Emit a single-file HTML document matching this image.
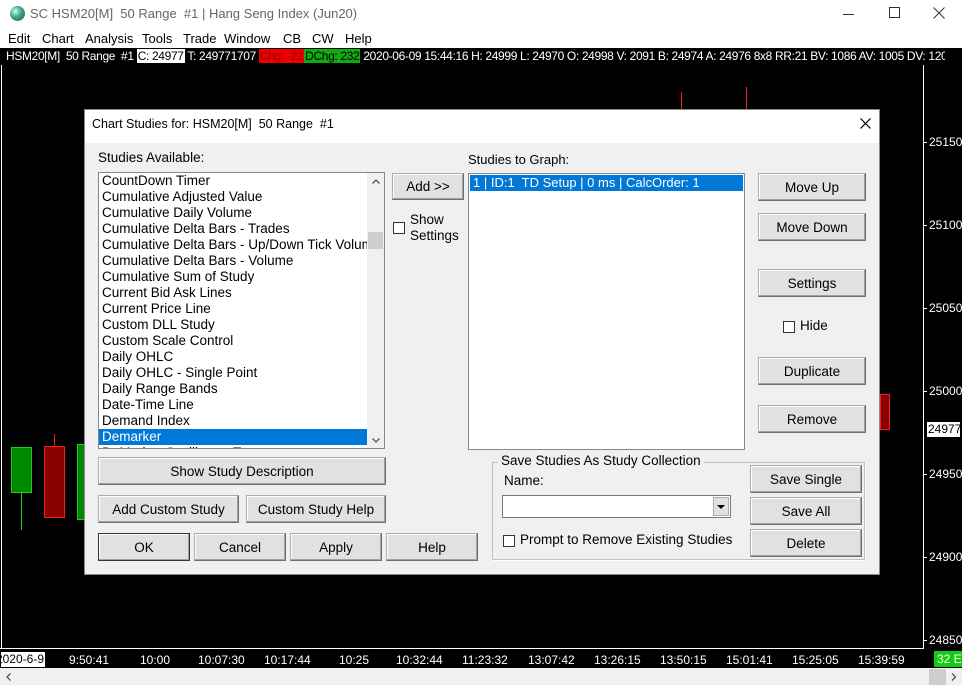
<!DOCTYPE html>
<html><head><meta charset="utf-8"><style>
*{margin:0;padding:0;box-sizing:border-box}
body{width:962px;height:685px;overflow:hidden;background:#fff;font-family:"Liberation Sans",Arial,sans-serif;font-size:13px;color:#000;position:relative}
.a{position:absolute}
.t{white-space:nowrap}
.btn{position:absolute;background:#e1e1e1;border:1px solid #adadad;border-right-color:#707070;border-bottom-color:#707070;box-shadow:inset -1px -1px 0 #a0a0a0,inset 1px 1px 0 #fff;text-align:center;font-size:13.5px;display:flex;align-items:center;justify-content:center;white-space:nowrap}
.cb{position:absolute;width:12px;height:12px;border:1px solid #333;background:#fff}
.li{height:16px;line-height:16px;padding-left:3px;font-size:13.5px;white-space:nowrap}
.wt{color:#fff;font-size:12px}
.tk{position:absolute;left:924px;width:3px;height:1px;background:#fff}
.m{position:absolute;top:31px;font-size:13px}
</style></head><body>
<div class="a" style="left:0;top:0;width:962px;height:29px;background:#fff"></div>
<div class="a" style="left:10px;top:6px;width:15px;height:15px;border-radius:50%;background:radial-gradient(circle at 35% 35%,#cfe,#4a9 40%,#274 80%)"></div>
<div class="a t" style="left:30px;top:6px;color:#666;font-size:13px">SC HSM20[M]&nbsp; 50 Range&nbsp; #1 | Hang Seng Index (Jun20)</div>
<div class="a" style="left:843px;top:14px;width:11px;height:1px;background:#333"></div>
<div class="a" style="left:889px;top:7px;width:11px;height:11px;border:1px solid #333"></div>
<svg class="a" style="left:933px;top:7px" width="12" height="12"><path d="M0.5 0.5L11.5 11.5M11.5 0.5L0.5 11.5" stroke="#333" stroke-width="1"/></svg>
<div class="m" style="left:8px">Edit</div><div class="m" style="left:42px">Chart</div><div class="m" style="left:85px">Analysis</div><div class="m" style="left:142px">Tools</div><div class="m" style="left:183px">Trade</div><div class="m" style="left:224px">Window</div><div class="m" style="left:283px">CB</div><div class="m" style="left:312px">CW</div><div class="m" style="left:345px">Help</div>
<div class="a" style="left:0;top:48px;width:962px;height:620px;background:#000"></div>
<div class="a t" style="left:0;top:48px;height:17px;line-height:17px;font-size:12px;letter-spacing:-0.35px;color:#fff;padding-left:6px;width:945px;overflow:hidden">HSM20[M]&nbsp; 50 Range&nbsp; #1 <span style="background:#fff;color:#000;padding:0 1px">C: 24977</span> T: 249771707 <span style="background:#e00;color:#900;padding:0 1px">Chg: -22</span><span style="background:#1a1;color:#000;padding:0 1px">DChg: 232</span> 2020-06-09 15:44:16 H: 24999 L: 24970 O: 24998 V: 2091 B: 24974 A: 24976 8x8 RR:21 BV: 1086 AV: 1005 DV: 120</div>
<div class="a" style="left:1px;top:65px;width:1px;height:583px;background:#fff"></div>
<div class="a" style="left:923px;top:65px;width:1px;height:584px;background:#fff"></div>
<div class="a" style="left:0;top:648px;width:924px;height:1px;background:#fff"></div>
<div class="tk" style="top:142px"></div><div class="a wt" style="left:929px;top:135px">25150</div>
<div class="tk" style="top:225px"></div><div class="a wt" style="left:929px;top:218px">25100</div>
<div class="tk" style="top:308px"></div><div class="a wt" style="left:929px;top:301px">25050</div>
<div class="tk" style="top:391px"></div><div class="a wt" style="left:929px;top:384px">25000</div>
<div class="a" style="left:927px;top:422px;width:33px;height:15px;background:#fff;font-size:12px;line-height:15px;padding-left:1px">24977</div>
<div class="tk" style="top:474px"></div><div class="a wt" style="left:929px;top:467px">24950</div>
<div class="tk" style="top:557px"></div><div class="a wt" style="left:929px;top:550px">24900</div>
<div class="tk" style="top:640px"></div><div class="a wt" style="left:929px;top:633px">24850</div>
<div class="a" style="left:21px;top:492px;width:1px;height:38px;background:#2c2"></div>
<div class="a" style="left:11px;top:447px;width:21px;height:46px;background:#080;border:1px solid #2c2"></div>
<div class="a" style="left:54px;top:434px;width:1px;height:13px;background:#e22"></div>
<div class="a" style="left:44px;top:446px;width:21px;height:72px;background:#800;border:1px solid #e22"></div>
<div class="a" style="left:77px;top:444px;width:8px;height:76px;background:#080;border:1px solid #2c2"></div>
<div class="a" style="left:880px;top:394px;width:10px;height:36px;background:#800;border:1px solid #e22"></div>
<div class="a" style="left:681px;top:92px;width:1px;height:18px;background:#e22"></div>
<div class="a" style="left:746px;top:87px;width:1px;height:23px;background:#e22"></div>
<div class="a" style="left:1px;top:652px;width:44px;height:15px;background:#fff;font-size:12px;line-height:15px;overflow:hidden;direction:rtl;text-align:right;padding-right:1px;white-space:nowrap">2020-6-9</div>
<div class="a wt t" style="left:64px;top:653px;width:966px;word-spacing:0">
<span class="a" style="left:5px">9:50:41</span><span class="a" style="left:76px">10:00</span><span class="a" style="left:134px">10:07:30</span><span class="a" style="left:200px">10:17:44</span><span class="a" style="left:275px">10:25</span><span class="a" style="left:332px">10:32:44</span><span class="a" style="left:398px">11:23:32</span><span class="a" style="left:464px">13:07:42</span><span class="a" style="left:530px">13:26:15</span><span class="a" style="left:596px">13:50:15</span><span class="a" style="left:662px">15:01:41</span><span class="a" style="left:728px">15:25:05</span><span class="a" style="left:794px">15:39:59</span></div>
<div class="a" style="left:934px;top:651px;width:28px;height:16px;background:#1c1;color:#fff;font-size:12px;line-height:16px;padding-left:3px">32 E</div>
<div class="a" style="left:0;top:668px;width:962px;height:17px;background:#f0f0f0"></div>
<svg class="a" style="left:6px;top:673px" width="6" height="8"><path d="M4.5 0.5L1 4L4.5 7.5" stroke="#555" fill="none" stroke-width="1.3"/></svg>
<div class="a" style="left:929px;top:669px;width:17px;height:16px;background:#cdcdcd"></div>
<svg class="a" style="left:951px;top:673px" width="6" height="8"><path d="M1 0.5L4.5 4L1 7.5" stroke="#555" fill="none" stroke-width="1.3"/></svg>

<div class="a" style="left:84px;top:109px;width:796px;height:466px;background:#f0f0f0;border:1px solid #888"></div>
<div class="a" style="left:85px;top:110px;width:794px;height:33px;background:#fff"></div>
<div class="a t" style="left:92px;top:117px;font-size:12.5px">Chart Studies for: HSM20[M]&nbsp; 50 Range&nbsp; #1</div>
<svg class="a" style="left:860px;top:118px" width="11" height="11"><path d="M0.5 0.5L10.5 10.5M10.5 0.5L0.5 10.5" stroke="#000" stroke-width="1.2"/></svg>

<div class="a t" style="left:98px;top:150px;font-size:13.5px">Studies Available:</div>
<div class="a" style="left:98px;top:172px;width:287px;height:277px;background:#fff;border:1px solid #828790;overflow:hidden">
<div style="position:absolute;left:0;top:0;width:268px">
<div class="li">CountDown Timer</div><div class="li">Cumulative Adjusted Value</div><div class="li">Cumulative Daily Volume</div><div class="li">Cumulative Delta Bars - Trades</div><div class="li" style="overflow:hidden">Cumulative Delta Bars - Up/Down Tick Volume</div><div class="li">Cumulative Delta Bars - Volume</div><div class="li">Cumulative Sum of Study</div><div class="li">Current Bid Ask Lines</div><div class="li">Current Price Line</div><div class="li">Custom DLL Study</div><div class="li">Custom Scale Control</div><div class="li">Daily OHLC</div><div class="li">Daily OHLC - Single Point</div><div class="li">Daily Range Bands</div><div class="li">Date-Time Line</div><div class="li">Demand Index</div><div class="li" style="background:#0078d7;color:#fff">Demarker</div><div class="li">DeMarker Oscillator - Tom</div>
</div>
<div style="position:absolute;left:268px;top:0;width:17px;height:275px;background:#f0f0f0"></div>
<div style="position:absolute;left:269px;top:59px;width:15px;height:17px;background:#cdcdcd"></div>
<svg style="position:absolute;left:273px;top:6px" width="8" height="5"><path d="M0.5 4.5L4 1L7.5 4.5" stroke="#555" fill="none" stroke-width="1.3"/></svg>
<svg style="position:absolute;left:273px;top:265px" width="8" height="5"><path d="M0.5 0.5L4 4L7.5 0.5" stroke="#555" fill="none" stroke-width="1.3"/></svg>
</div>

<div class="btn" style="left:392px;top:173px;width:72px;height:27px">Add &gt;&gt;</div>
<div class="cb" style="left:393px;top:222px"></div>
<div class="a" style="left:410px;top:212px;font-size:13.5px;line-height:16px">Show<br>Settings</div>

<div class="a t" style="left:468px;top:152px;font-size:13px">Studies to Graph:</div>
<div class="a" style="left:468px;top:173px;width:277px;height:277px;background:#fff;border:1px solid #828790">
<div class="li" style="background:#0078d7;color:#fff;margin:1px;font-size:13px">1 | ID:1&nbsp; TD Setup | 0 ms | CalcOrder: 1</div></div>

<div class="btn" style="left:758px;top:173px;width:108px;height:28px">Move Up</div>
<div class="btn" style="left:758px;top:213px;width:108px;height:28px">Move Down</div>
<div class="btn" style="left:758px;top:269px;width:108px;height:28px">Settings</div>
<div class="cb" style="left:783px;top:321px"></div>
<div class="a" style="left:800px;top:318px;font-size:13.5px">Hide</div>
<div class="btn" style="left:758px;top:357px;width:108px;height:28px">Duplicate</div>
<div class="btn" style="left:758px;top:405px;width:108px;height:28px">Remove</div>

<div class="btn" style="left:98px;top:457px;width:288px;height:28px">Show Study Description</div>
<div class="btn" style="left:98px;top:495px;width:141px;height:28px">Add Custom Study</div>
<div class="btn" style="left:246px;top:495px;width:140px;height:28px">Custom Study Help</div>
<div class="btn" style="left:98px;top:533px;width:92px;height:28px;border:1px solid #333">OK</div>
<div class="btn" style="left:194px;top:533px;width:92px;height:28px">Cancel</div>
<div class="btn" style="left:290px;top:533px;width:92px;height:28px">Apply</div>
<div class="btn" style="left:386px;top:533px;width:92px;height:28px">Help</div>

<div class="a" style="left:492px;top:462px;width:373px;height:98px;border:1px solid #c0c0c0;box-shadow:1px 1px 0 #fff"></div>
<div class="a t" style="left:498px;top:453px;background:#f0f0f0;padding:0 3px;font-size:13.5px">Save Studies As Study Collection</div>
<div class="a t" style="left:504px;top:473px;font-size:13.5px">Name:</div>
<div class="a" style="left:502px;top:495px;width:229px;height:23px;background:#fff;border:1px solid #7a7a7a"></div>
<div class="a" style="left:713px;top:497px;width:16px;height:19px;background:#e1e1e1;border:1px solid #adadad"></div>
<div class="a" style="left:717px;top:505px;width:0;height:0;border-left:4px solid transparent;border-right:4px solid transparent;border-top:4px solid #000"></div>
<div class="cb" style="left:503px;top:535px"></div>
<div class="a t" style="left:520px;top:532px;font-size:13.5px">Prompt to Remove Existing Studies</div>
<div class="btn" style="left:750px;top:465px;width:112px;height:28px">Save Single</div>
<div class="btn" style="left:750px;top:497px;width:112px;height:28px">Save All</div>
<div class="btn" style="left:750px;top:529px;width:112px;height:28px">Delete</div>
</body></html>
